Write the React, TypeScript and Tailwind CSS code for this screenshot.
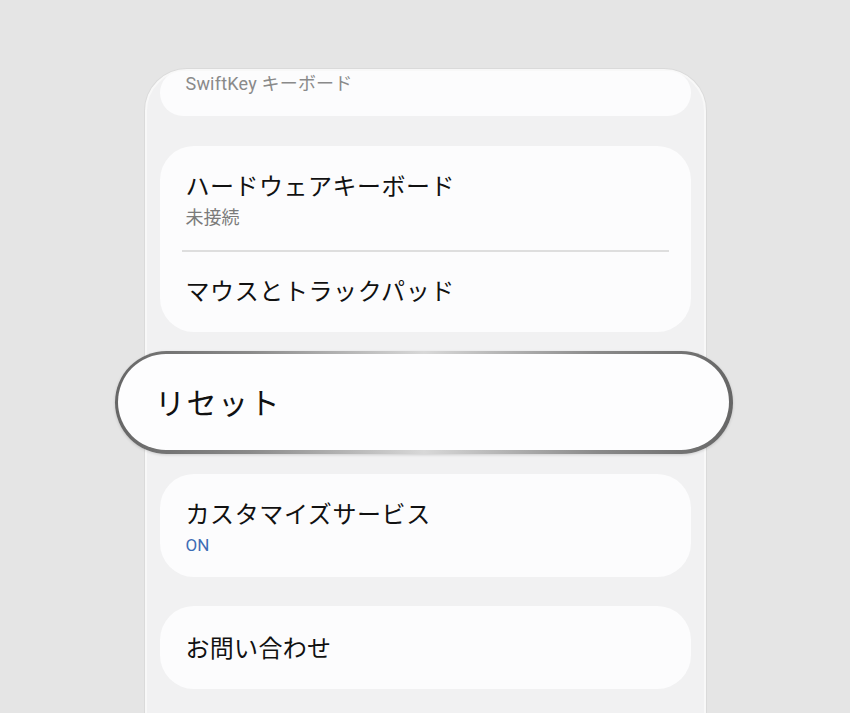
const FONT = "font-['Roboto','Noto_Sans_CJK_JP',sans-serif]";

function Card({ children, className = "" }: { children: React.ReactNode; className?: string }) {
  return (
    <div className={`rounded-[34px] bg-[#fcfcfd] ${className}`}>{children}</div>
  );
}

export default function App() {
  return (
    <div className={`w-[850px] h-[713px] overflow-hidden bg-[#e5e5e5] pt-[69px] ${FONT}`}>
      {/* phone frame */}
      <div className="mx-auto w-[561px] h-[700px] rounded-t-[42px] border-[2px] border-[#f8f8f8] bg-[#f1f1f2] shadow-[0_0_0_1px_#dadada] px-[13px]">
        {/* top card, cut by the frame */}
        <div className="h-[45px] rounded-b-[30px] rounded-t-[28px] bg-[#fcfcfd] px-[26px] pt-[2px]">
          <p className="text-[18px] leading-[22px] text-[#8a8a8a] tracking-[0.2px]">SwiftKey キーボード</p>
        </div>

        <Card className="mt-[30px]">
          <div className="px-[26px] pt-[25px] pb-[20px]">
            <p className="text-[24px] leading-[32px] tracking-[0.5px] text-[#111]">ハードウェアキーボード</p>
            <p className="mt-[3px] text-[18px] leading-[24px] text-[#7b7b7b]">未接続</p>
          </div>
          <div className="mx-[22px] h-[1.5px] bg-[#dedede]" />
          <div className="flex h-[80px] items-center px-[26px]">
            <p className="text-[24px] leading-[32px] tracking-[0.6px] text-[#111]">マウスとトラックパッド</p>
          </div>
        </Card>

        {/* highlighted reset row */}
        <div className="mt-[19px] -ml-[45px] -mr-[42px] rounded-full bg-[linear-gradient(90deg,#666,#8a8a8a_22%,#d8d8d8_50%,#8a8a8a_78%,#666)] p-[3.5px] shadow-[0_1px_3px_rgba(0,0,0,0.15)]">
          <div className="flex h-[96px] items-center rounded-full bg-[#fdfdfe] px-[37px]">
            <p className="pt-[3px] text-[30px] leading-[40px] tracking-[1.5px] text-[#111]">リセット</p>
          </div>
        </div>

        <Card className="mt-[20px] h-[103px]">
          <div className="px-[26px] pt-[25px]">
            <p className="text-[24px] leading-[32px] tracking-[0.6px] text-[#111]">カスタマイズサービス</p>
            <p className="mt-[3px] text-[17px] leading-[22px] text-[#3d6db5]">ON</p>
          </div>
        </Card>

        <Card className="mt-[29px] flex h-[83px] items-center px-[26px] pt-[4px]">
          <p className="text-[24px] leading-[32px] tracking-[0.3px] text-[#111]">お問い合わせ</p>
        </Card>

        <Card className="mt-[29px] h-[83px]">
          <div />
        </Card>
      </div>
    </div>
  );
}
